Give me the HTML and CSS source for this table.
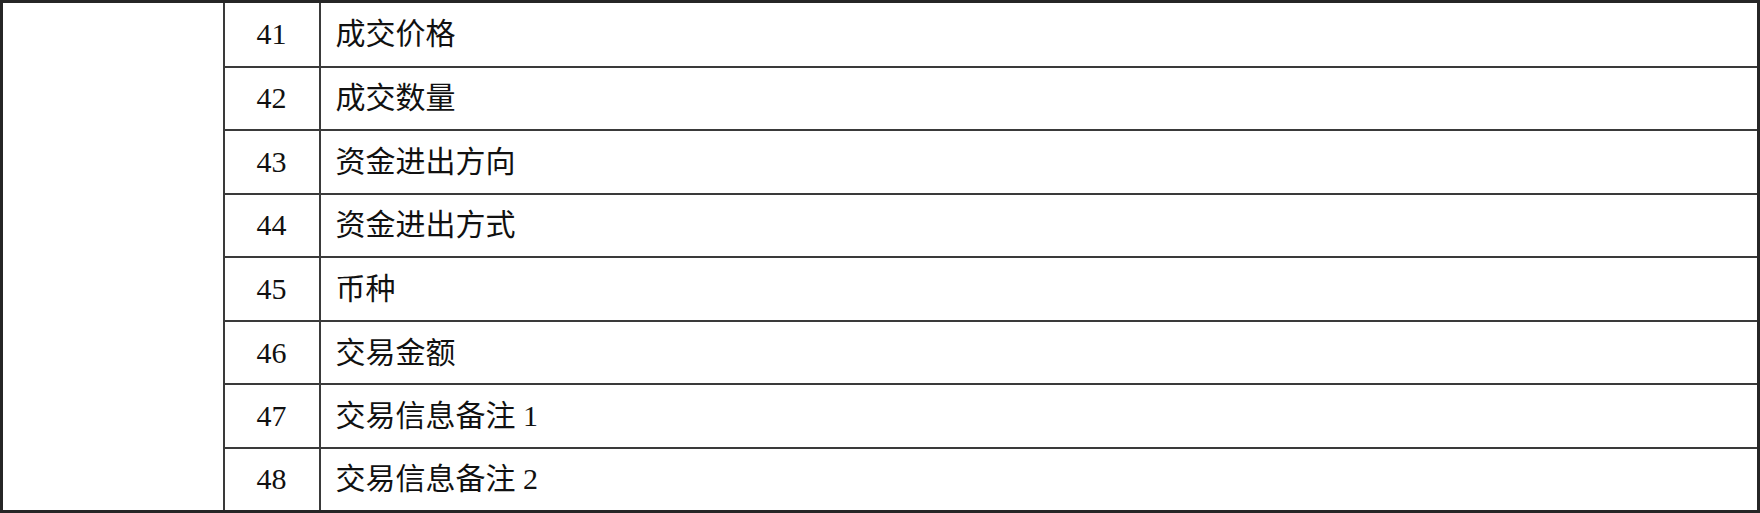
FILE: index.html
```html
<!DOCTYPE html>
<html lang="zh-CN">
<head>
    <meta charset="UTF-8">
    <meta name="viewport" content="width=device-width, initial-scale=1.0">
    <title>交易字段</title>
    <link rel="stylesheet" href="styles.css">
</head>
<body>
    <table class="field-table">
        <colgroup>
            <col class="col-group">
            <col class="col-no">
            <col class="col-name">
        </colgroup>
        <tbody>
            <tr class="first">
                <td class="group" rowspan="8"></td>
                <td class="no">41</td>
                <td class="name">成交价格</td>
            </tr>
            <tr>
                <td class="no">42</td>
                <td class="name">成交数量</td>
            </tr>
            <tr>
                <td class="no">43</td>
                <td class="name">资金进出方向</td>
            </tr>
            <tr>
                <td class="no">44</td>
                <td class="name">资金进出方式</td>
            </tr>
            <tr>
                <td class="no">45</td>
                <td class="name">币种</td>
            </tr>
            <tr>
                <td class="no">46</td>
                <td class="name">交易金额</td>
            </tr>
            <tr>
                <td class="no">47</td>
                <td class="name">交易信息备注 1</td>
            </tr>
            <tr>
                <td class="no">48</td>
                <td class="name">交易信息备注 2</td>
            </tr>
        </tbody>
    </table>
</body>
</html>
```

FILE: styles.css
```css
* { margin: 0; padding: 0; box-sizing: border-box; }
html, body { background: #fff; }
body { font-family: 'Liberation Serif', 'Noto Sans CJK SC', serif; color: #111; font-size: 30px; }
.field-table { width: 1760px; height: 513px; border-collapse: collapse; table-layout: fixed; border: 3px solid #262626; }
.col-group { width: 222px; }
.col-no { width: 96px; }
.field-table td { border: 2px solid #3a3a3a; height: 63.5px; vertical-align: middle; line-height: 1; }
.field-table tr.first td { height: 65px; }
.field-table td.group { border-top: 3px solid #262626; border-bottom: 3px solid #262626; border-left: 3px solid #262626; }
.no { text-align: center; }
.name { text-align: left; padding-left: 15px; }
```
